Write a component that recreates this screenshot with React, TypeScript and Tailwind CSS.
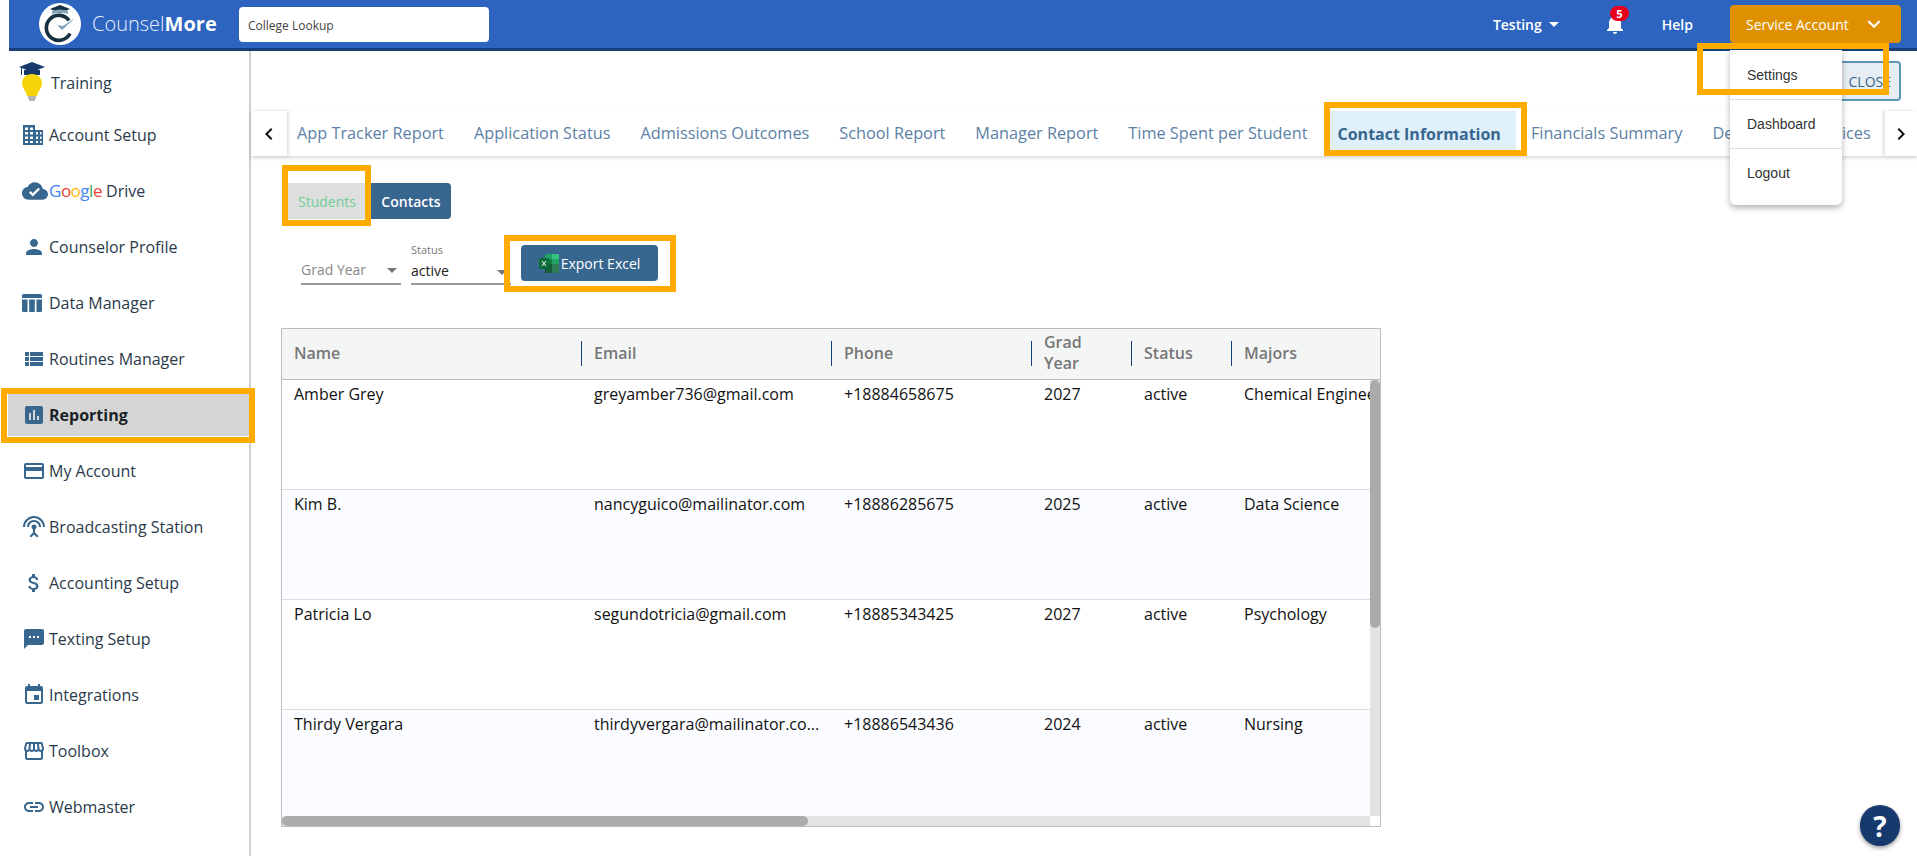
import React from "react";
import {
  MdArrowDropDown, MdAssessment, MdAttachMoney, MdChevronLeft, MdChevronRight, MdCloudDone,
  MdCreditCard, MdEvent, MdExpandMore, MdLink, MdNotifications, MdPerson, MdSettingsInputAntenna, MdSms,
  MdStorefront, MdViewList,
} from "react-icons/md";

const font = { fontFamily: '"Open Sans", sans-serif' };

function Logo() {
  return (
    <svg width="42" height="42" viewBox="0 0 42 42">
      <circle cx="21" cy="21" r="21" fill="#fff" />
      <path d="M30 17.5a12.5 12.5 0 1 0 1 13" fill="none" stroke="#17303f" strokeWidth="3.6" />
      <path d="M18 22l5 5 13-12-12 8z" fill="#7fa6bd" />
      <path d="M21 2l10 4-10 4-10-4z" fill="#17303f" />
      <path d="M13 8q8-3 16 0v3q-8-3-16 0z" fill="#7fa6bd" />
    </svg>
  );
}

function Bulb() {
  return (
    <svg width="28" height="42" viewBox="0 0 28 42">
      <path d="M14 0L27 5 14 10 1 5z" fill="#173a6e" />
      <path d="M6 8h16v5H6z" fill="#173a6e" />
      <path d="M3 6h1v7H3z" fill="#173a6e" />
      <path d="M14 12c6 0 10 4 10 9 0 5-4 8-5 13H9C8 29 4 26 4 21c0-5 4-9 10-9z" fill="#f4d308" />
      <path d="M10 34h8v3h-8zM11 37h6v2h-6z" fill="#b5b5b5" />
    </svg>
  );
}

function Excel() {
  return (
    <svg width="20" height="19" viewBox="0 0 20 19" className="shrink-0">
      <rect x="6" y="0" width="7" height="5" fill="#21a366" />
      <rect x="13" y="0" width="7" height="5" fill="#33c481" />
      <rect x="6" y="5" width="7" height="5" fill="#107c41" />
      <rect x="13" y="5" width="7" height="5" fill="#21a366" />
      <rect x="6" y="10" width="7" height="9" fill="#185c37" />
      <rect x="13" y="10" width="7" height="9" fill="#2f7d54" />
      <rect x="0" y="4" width="10" height="11" rx="1" fill="#0f6b3a" />
      <path d="M3 7l4 5M7 7l-4 5" stroke="#fff" strokeWidth="1" />
    </svg>
  );
}

function BuildingIcon() {
  return (
    <svg width="22" height="20" viewBox="0 0 22 20" className="text-[#37668f]">
      <path fillRule="evenodd" fill="currentColor" d="M1 0h12v5h8v15H1zM3 2.500v2.500h3V2.500zM8 2.500v2.500h3V2.500zM3 7v2.500h3V7zM8 7v2.500h3V7zM14 7v2.500h2V7zM18 7v2.500h1.500V7zM3 11.500V14h3v-2.500zM8 11.500V14h3v-2.500zM14 11.500V14h2v-2.500zM18 11.500V14h1.500v-2.500zM3 16v2h3v-2zM8 16v2h3v-2zM14 16v2h2v-2zM18 16v2h1.500v-2z" />
    </svg>
  );
}

function TableIcon() {
  return (
    <svg width="20" height="18" viewBox="0 0 20 18" className="text-[#37668f]">
      <path fill="currentColor" d="M1.500 0h17A1.500 1.500 0 0 1 20 1.500V4H0V1.500A1.500 1.500 0 0 1 1.500 0zM0 5.500h5.500V18H1.500A1.500 1.500 0 0 1 0 16.500zM7.200 5.500h5.600V18H7.200zM14.500 5.500H20v11a1.500 1.500 0 0 1-1.500 1.500h-4z" />
    </svg>
  );
}

function Highlight({ className }: { className: string }) {
  return <div className={`absolute border-[6px] border-[#ffab00] pointer-events-none z-30 ${className}`} />;
}

const iconClass = "text-[#37668f] shrink-0";

const nav: { label: React.ReactNode; icon: React.ReactNode; active?: boolean }[] = [
  { label: "Account Setup", icon: <BuildingIcon /> },
  {
    label: (
      <span>
        <span className="text-[17px] font-medium tracking-[-0.5px]">
          <span className="text-[#4285f4]">G</span>
          <span className="text-[#ea4335]">o</span>
          <span className="text-[#fbbc05]">o</span>
          <span className="text-[#4285f4]">g</span>
          <span className="text-[#34a853]">l</span>
          <span className="text-[#ea4335]">e</span>
        </span>{" "}
        Drive
      </span>
    ),
    icon: <MdCloudDone size={26} className={iconClass} />,
  },
  { label: "Counselor Profile", icon: <MdPerson size={24} className={iconClass} /> },
  { label: "Data Manager", icon: <TableIcon /> },
  { label: "Routines Manager", icon: <MdViewList size={24} className={iconClass} /> },
  { label: "Reporting", icon: <MdAssessment size={24} className={iconClass} />, active: true },
  { label: "My Account", icon: <MdCreditCard size={24} className={iconClass} /> },
  { label: "Broadcasting Station", icon: <MdSettingsInputAntenna size={24} className={iconClass} /> },
  { label: "Accounting Setup", icon: <MdAttachMoney size={24} className={iconClass} /> },
  { label: "Texting Setup", icon: <MdSms size={24} className={iconClass} /> },
  { label: "Integrations", icon: <MdEvent size={24} className={iconClass} /> },
  { label: "Toolbox", icon: <MdStorefront size={24} className={iconClass} /> },
  { label: "Webmaster", icon: <MdLink size={24} className={iconClass} /> },
];

const tabs = [
  "App Tracker Report",
  "Application Status",
  "Admissions Outcomes",
  "School Report",
  "Manager Report",
  "Time Spent per Student",
  "Contact Information",
  "Financials Summary",
  "Department Services",
];

const rows = [
  ["Amber Grey", "greyamber736@gmail.com", "+18884658675", "2027", "active", "Chemical Engineering"],
  ["Kim B.", "nancyguico@mailinator.com", "+18886285675", "2025", "active", "Data Science"],
  ["Patricia Lo", "segundotricia@gmail.com", "+18885343425", "2027", "active", "Psychology"],
  ["Thirdy Vergara", "thirdyvergara@mailinator.co...", "+18886543436", "2024", "active", "Nursing"],
];

const grid = "grid grid-cols-[300px_250px_200px_100px_100px_150px]";

export default function App() {
  return (
    <div style={font} className="relative w-[1917px] h-[856px] overflow-hidden bg-white flex flex-col text-[#222]">
      <header className="ml-[9px] h-[51px] shrink-0 bg-[#2d64c0] border-b-[3px] border-[#173f77] flex items-center text-white">
        <div className="ml-[30px] flex items-center">
          <Logo />
        </div>
        <div className="ml-[11px] w-[124px] whitespace-nowrap text-[20px] leading-none text-[#e8eefa] font-light">
          Counsel<span className="font-bold text-white">More</span>
        </div>
        <div className="ml-[23px] w-[250px] h-[35px] bg-white rounded-[4px] flex items-center pl-[9px] pt-[2px] text-[12px] text-[#444] mt-[1px]">
          College Lookup
        </div>
        <div className="ml-auto flex items-center">
          <div className="flex items-center text-[14px] font-semibold">
            Testing
            <MdArrowDropDown size={24} />
          </div>
          <div className="relative ml-[37px] w-[24px] h-[24px]">
            <MdNotifications size={24} />
            <span className="absolute left-[7px] -top-[6px] w-[19px] h-[15px] rounded-full bg-[#e8001c] text-white text-[11px] font-bold leading-[15px] text-center">5</span>
          </div>
          <div className="ml-[35px] text-[14px] font-semibold">Help</div>
          <div className="ml-[37px] mr-[16px] w-[171px] h-[38px] bg-[#de9000] rounded-[4px] flex items-center pl-[16px] text-[14px] font-medium">
            Service Account
            <MdExpandMore size={26} className="ml-[12px]" />
          </div>
        </div>
      </header>

      <div className="flex flex-1 min-h-0">
        <aside className="w-[251px] shrink-0 border-r-2 border-[#cfcfcf] pt-[11px] flex flex-col">
          <div className="ml-[8px] h-[42px] mb-[10px] flex items-center text-[16px] relative">
            <span className="ml-[10px] mr-[5px]"><Bulb /></span>
            <span className="text-[#2b3a4a]">Training</span>
          </div>
          {nav.map((n, i) => (
            <div
              key={i}
              className={`ml-[8px] h-[42px] mb-[14px] pl-[14px] flex items-center text-[16px] ${n.active ? "bg-[#d5d5d5] font-bold text-[#1a1f28]" : "text-[#2b3a4a]"}`}
            >
              <span className="w-[27px] flex justify-start">{n.icon}</span>
              {n.label}
            </div>
          ))}
        </aside>

        <main className="flex-1 min-w-0 flex flex-col">
          <div className="h-[60px] shrink-0 flex justify-end items-start pt-[10px] pr-[16px]">
            <div className="w-[110px] h-[40px] bg-[#e6edf3] border-2 border-[#5b96b8] rounded-[4px] flex items-center justify-end pr-[8px] text-[#37668f] text-[14px]">
              CLOSE
            </div>
          </div>
          <div className="h-[45px] shrink-0 flex bg-white shadow-[0_2px_4px_rgba(0,0,0,0.15)] relative">
            <div className="w-[36px] shrink-0 flex items-center justify-center shadow-[2px_0_3px_rgba(0,0,0,0.12)] z-10 bg-white">
              <MdChevronLeft size={24} className="text-[#111]" />
            </div>
            <div className="flex-1 min-w-0 flex overflow-hidden pl-[10px] whitespace-nowrap text-[16.300px]">
              {tabs.map((t) => {
                const on = t === "Contact Information";
                return (
                  <div
                    key={t}
                    className={`flex items-center shrink-0 ${on ? "bg-[#dff0fb] font-bold text-[#37668f] pl-[13px] pr-[15px] ml-[-13px] mr-[15px] text-[16px]" : "text-[#5b7fa6] mr-[30px]"}`}
                  >
                    {t}
                  </div>
                );
              })}
            </div>
            <div className="w-[32px] shrink-0 flex items-center justify-center shadow-[-2px_0_3px_rgba(0,0,0,0.12)] z-10 bg-white">
              <MdChevronRight size={24} className="text-[#111]" />
            </div>
          </div>

          <div className="mt-[27px] ml-[37px] flex h-[36px] text-[14px]">
            <div className="w-[83px] bg-[#dedede] flex items-center justify-center pr-[5px] text-[#6fcf97]">Students</div>
            <div className="w-[80px] bg-[#37668f] rounded-r-[4px] flex items-center justify-center text-white font-semibold">Contacts</div>
          </div>

          <div className="mt-[22px] ml-[50px] flex items-start">
            <div className="w-[100px] h-[44px] border-b-2 border-[#999] flex items-end pb-[3px] justify-between text-[14px] text-[#888]">
              Grad Year
              <MdArrowDropDown size={24} className="text-[#777] -mb-[2px] -mr-[3px]" />
            </div>
            <div className="ml-[10px] w-[100px] h-[44px] border-b-2 border-[#999] flex flex-col justify-end pb-[2px] relative">
              <span className="text-[11px] text-[#777] leading-[12px] mb-[5px]">Status</span>
              <span className="flex justify-between text-[14px] text-[#222] leading-[20px]">
                active
                <MdArrowDropDown size={24} className="text-[#777] -mt-[1px] -mb-[3px] -mr-[3px]" />
              </span>
            </div>
            <div className="ml-[10px] mt-[4px] w-[137px] h-[36px] bg-[#37668f] rounded-[4px] flex items-center justify-center gap-[2px] text-[14px] text-white font-medium">
              <Excel />
              Export Excel
            </div>
          </div>

          <div className="mt-[43px] ml-[30px] w-[1100px] h-[499px] border border-[#bdbdbd] flex flex-col text-[16px]">
            <div className={`${grid} h-[51px] shrink-0 bg-[#f4f6f6] border-b border-[#bdbdbd] text-[#777] font-semibold pb-[2px]`}>
              {["Name", "Email", "Phone", "Grad Year", "Status", "Majors"].map((h, i) => (
                <div key={h} className="pl-[12px] flex items-center justify-between min-w-0 leading-[21px]">
                  <span className={h === "Grad Year" ? "w-[50px]" : ""}>{h}</span>
                  {i < 5 && <span className="w-px h-[25px] bg-[#173f77] shrink-0" />}
                </div>
              ))}
            </div>
            <div className="flex flex-1 min-h-0">
              <div className="flex-1 min-w-0 overflow-hidden">
                {rows.map((r, i) => (
                  <div key={i} className={`${grid} h-[110px] border-b border-[#ddd] ${i % 2 ? "bg-[#fbfcff]" : "bg-white"} text-[#111]`}>
                    {r.map((c, j) => (
                      <div key={j} className="pl-[12px] pt-[2px] whitespace-nowrap overflow-hidden">
                        {c}
                      </div>
                    ))}
                  </div>
                ))}
              </div>
              <div className="w-[10px] shrink-0 bg-[#e3e3e3]">
                <div className="h-[248px] bg-[#ababab] rounded-[5px]" />
              </div>
            </div>
            <div className="h-[10px] shrink-0 flex">
              <div className="flex-1 bg-[#e3e3e3]">
                <div className="w-[526px] h-full bg-[#ababab] rounded-[5px]" />
              </div>
              <div className="w-[10px] bg-white" />
            </div>
          </div>
        </main>
      </div>

      <div className="absolute left-[1730px] top-[50px] w-[112px] h-[155px] bg-white rounded-b-[6px] shadow-[0_3px_6px_rgba(0,0,0,0.3)] z-20 text-[14px] text-[#333] flex flex-col" style={{ fontFamily: '"Liberation Sans", sans-serif' }}>
        <div className="h-[50px] border-b border-[#ddd] pl-[17px] flex items-center pt-[2px]">Settings</div>
        <div className="h-[49px] border-b border-[#ddd] pl-[17px] flex items-center">Dashboard</div>
        <div className="h-[49px] pl-[17px] flex items-center">Logout</div>
      </div>

      <Highlight className="left-[1px] top-[388px] w-[254px] h-[55px]" />
      <Highlight className="left-[1324px] top-[102px] w-[203px] h-[54px]" />
      <Highlight className="left-[282px] top-[165px] w-[89px] h-[61px]" />
      <Highlight className="left-[504px] top-[235px] w-[172px] h-[57px]" />
      <Highlight className="left-[1697px] top-[43px] w-[192px] h-[52px]" />

      <div className="absolute left-[1860px] top-[805px] w-[40px] h-[41px] rounded-full bg-[#173a6e] shadow-[0_2px_4px_rgba(0,0,0,0.4)] flex items-center justify-center text-white text-[28px] font-bold z-30">?</div>
    </div>
  );
}
